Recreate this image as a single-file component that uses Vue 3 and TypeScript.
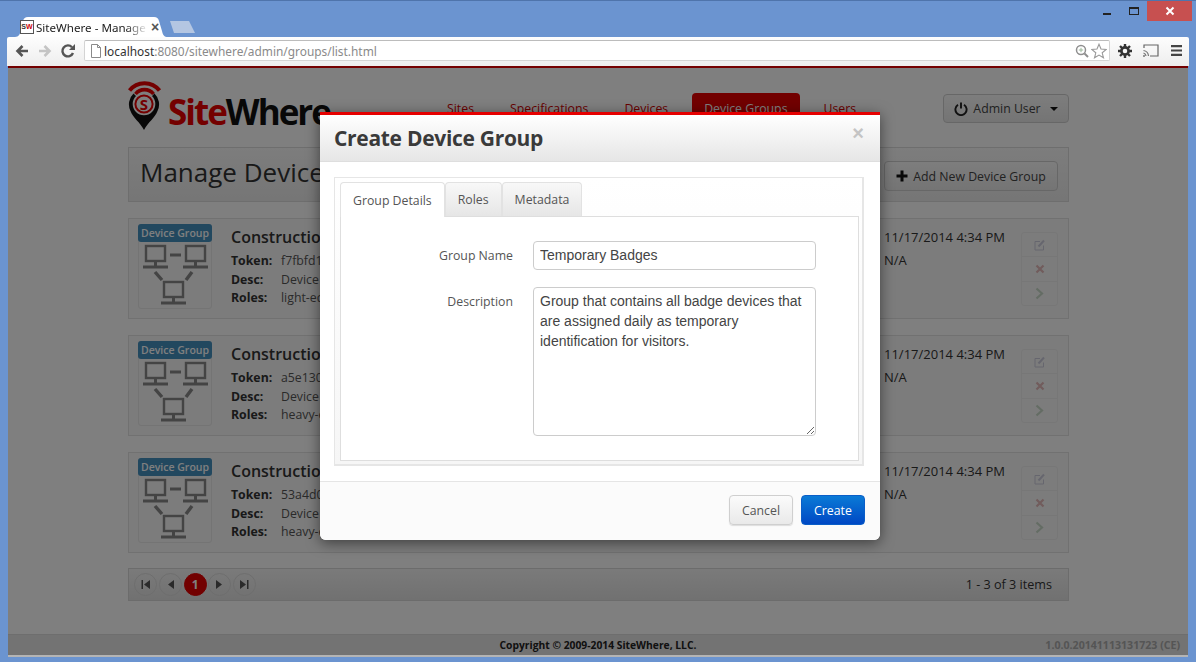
<template>
  <div class="window">
    <div class="tabstrip">
      <div class="tab">
        <svg class="tab-shape" width="153" height="20" viewBox="0 0 153 20"><path d="M0 20 C4 20 5 17 6 13 L8 4 C9 1 10 0 13 0 H139 C142 0 143 1 144 4 L147 14 C148 18 149 20 153 20 Z" fill="#fff" /></svg>
        <span class="favicon"><b>S</b><i>W</i></span>
        <span class="tab-title">SiteWhere - Manage</span>
        <span class="tab-close">×</span>
      </div>
      <svg class="newtab" width="25" height="12" viewBox="0 0 25 12"><path d="M0 0 H19 L25 12 H4 Z" fill="#b4c6e2" /></svg>
      <div class="win-controls">
        <span class="win-min"></span>
        <span class="win-max"></span>
        <span class="win-close">
          <svg width="10" height="10" viewBox="0 0 10 10"><path d="M1.5 1.5 L8.5 8.5 M8.5 1.5 L1.5 8.5" stroke="#fff" stroke-width="2" /></svg>
        </span>
      </div>
    </div>

    <div class="toolbar">
      <svg class="nav-icon" width="16" height="16" viewBox="0 0 16 16"><path d="M14 8 H4 M8.5 3 L3.5 8 L8.5 13" fill="none" stroke="#555" stroke-width="2.6" /></svg>
      <svg class="nav-icon" width="16" height="16" viewBox="0 0 16 16"><path d="M2 8 H12 M7.5 3 L12.5 8 L7.5 13" fill="none" stroke="#c4c4c4" stroke-width="2.6" /></svg>
      <svg class="nav-icon" width="16" height="16" viewBox="0 0 16 16"><path d="M13 10 A5.5 5.5 0 1 1 12 4.2" fill="none" stroke="#555" stroke-width="2.4" /><path d="M9 7 H15 V1 Z" fill="#555" /></svg>
      <div class="omnibox">
        <svg width="12" height="14" viewBox="0 0 12 14"><path d="M1.5 .5 H7.5 L10.5 3.5 V13.5 H1.5 Z M7.5 .5 V3.5 H10.5" fill="#fff" stroke="#8a8a8a" /></svg>
        <span class="url"><em>localhost</em>:8080/sitewhere/admin/groups/list.html</span>
        <svg class="omni-zoom" width="14" height="14" viewBox="0 0 14 14"><circle cx="6" cy="6" r="4.5" fill="none" stroke="#8f8f8f" stroke-width="1.5" /><path d="M9.5 9.5 L13 13" stroke="#8f8f8f" stroke-width="2" /><path d="M3.8 6 H8.2 M6 3.8 V8.2" stroke="#9cb89c" /></svg>
        <svg width="16" height="16" viewBox="0 0 16 16"><path d="M8 1.2 L10 6 L15.2 6.4 L11.2 9.8 L12.5 14.8 L8 12.1 L3.5 14.8 L4.8 9.8 L.8 6.4 L6 6 Z" fill="#fff" stroke="#999" stroke-width="1.1" /></svg>
      </div>
      <svg class="tool-icon" width="14" height="14" viewBox="0 0 14 14"><circle cx="7" cy="7" r="3.6" fill="none" stroke="#333" stroke-width="2.6" /><path d="M7 0 V3 M7 11 V14 M0 7 H3 M11 7 H14 M2 2 L4 4 M10 10 L12 12 M12 2 L10 4 M4 10 L2 12" stroke="#333" stroke-width="2.4" /></svg>
      <svg class="tool-icon cast" width="16" height="13" viewBox="0 0 16 13"><path d="M1 4 V1 H15 V12 H7" fill="none" stroke="#666" stroke-width="1.2" /><path d="M.5 6.5 A6 6 0 0 1 5.5 12 M.5 9 A3.5 3.5 0 0 1 3 12" fill="none" stroke="#777" stroke-width="1.2" /><circle cx="1" cy="12" r="1" fill="#777" /></svg>
      <svg class="tool-icon menu" width="11" height="11" viewBox="0 0 11 11"><path d="M0 1.2 H11 M0 5.5 H11 M0 9.8 H11" stroke="#444" stroke-width="2.2" /></svg>
    </div>

    <div class="page">
      <div class="container">
        <header class="site-head">
          <div class="logo">
            <svg width="36" height="51" viewBox="0 0 36 51">
              <path d="M1.5 10.5 A19 19 0 0 1 31.5 10.5" fill="none" stroke="#e80000" stroke-width="4" />
              <path d="M7.5 14 A11.5 11.5 0 0 1 25.5 14" fill="none" stroke="#e80000" stroke-width="3.6" />
              <path d="M5.5 13.5 A15 15 0 0 0 2.5 31 C5 38 12 42 16 50 C20 42 27 38 29.5 31 A15 15 0 0 0 26.5 13.5 L24 16 A11.3 11.3 0 1 1 8 16 Z" fill="#111" />
              <circle cx="16" cy="24" r="8.6" fill="none" stroke="#e80000" stroke-width="2" />
              <text x="16" y="29.5" text-anchor="middle" class="logo-s">S</text>
            </svg>
            <span class="logo-text"><span>Site</span>Where</span>
          </div>
          <nav class="main-nav">
            <a v-for="item in navItems" :key="item" :class="{ active: item === 'Device Groups' }">{{ item }}</a>
          </nav>
          <button class="btn user-btn">
            <svg width="14" height="14" viewBox="0 0 14 14"><path d="M4 2.8 A5.6 5.6 0 1 0 10 2.8 M7 .5 V6.5" fill="none" stroke="#222" stroke-width="1.9" /></svg>
            Admin User
            <span class="caret"></span>
          </button>
        </header>

        <div class="title-bar">
          <h1>Manage Device Groups</h1>
          <button class="btn add-btn">
            <svg width="12" height="12" viewBox="0 0 12 12"><path d="M6 .5 V11.5 M.5 6 H11.5" stroke="#111" stroke-width="3" /></svg>
            Add New Device Group
          </button>
        </div>

        <article v-for="group in groups" :key="group.token" class="group-card">
          <div class="thumb">
            <span class="thumb-badge">Device Group</span>
            <svg width="74" height="66" viewBox="0 0 74 66" fill="none" stroke="#888">
              <g v-for="pos in monitors" :key="pos[0]" :transform="`translate(${pos[0]} ${pos[1]})`">
                <rect x="3" y="1" width="19" height="15" stroke-width="2.4" />
                <path d="M12.5 17 V21" stroke-width="3" />
                <path d="M0 22 H25" stroke-width="3" />
              </g>
              <path d="M32 13 H43" stroke-width="3" />
              <path d="M17 30 L24 38 M54 30 L48 38" stroke-width="3.4" />
            </svg>
          </div>
          <div class="group-info">
            <h2>{{ group.name }}</h2>
            <dl>
              <dt>Token:</dt><dd>{{ group.token }}</dd>
              <dt>Desc:</dt><dd>{{ group.desc }}</dd>
              <dt>Roles:</dt><dd>{{ group.roles }}</dd>
            </dl>
          </div>
          <div class="group-dates">
            <span>11/17/2014 4:34 PM</span>
            <span>N/A</span>
          </div>
          <div class="group-actions">
            <span>
              <svg width="12" height="12" viewBox="0 0 12 12" fill="none" stroke="#8d8db5"><path d="M9.5 6.5 V11 H1 V2.5 H6" /><path d="M4.5 7.5 L10 1.5" stroke-width="2" /></svg>
            </span>
            <span>
              <svg width="10" height="10" viewBox="0 0 10 10"><path d="M1.5 1.5 L8.5 8.5 M8.5 1.5 L1.5 8.5" stroke="#c25a5a" stroke-width="2.2" /></svg>
            </span>
            <span>
              <svg width="9" height="13" viewBox="0 0 9 13"><path d="M1.5 1.5 L7 6.5 L1.5 11.5" fill="none" stroke="#82ad82" stroke-width="2.2" /></svg>
            </span>
          </div>
        </article>

        <div class="pager">
          <span class="pg">
            <svg width="9" height="9" viewBox="0 0 9 9"><path d="M.5 0 H2 V9 H.5 Z M9 0 V9 L3 4.5 Z" /></svg>
          </span>
          <span class="pg">
            <svg width="7" height="9" viewBox="0 0 7 9"><path d="M7 0 V9 L1 4.5 Z" /></svg>
          </span>
          <span class="pg current">1</span>
          <span class="pg">
            <svg width="7" height="9" viewBox="0 0 7 9"><path d="M0 0 V9 L6 4.5 Z" /></svg>
          </span>
          <span class="pg">
            <svg width="9" height="9" viewBox="0 0 9 9"><path d="M0 0 V9 L6 4.5 Z M7 0 H8.5 V9 H7 Z" /></svg>
          </span>
          <span class="pager-info">1 - 3 of 3 items</span>
        </div>
      </div>

      <footer class="site-foot">
        <span>Copyright © 2009-2014 SiteWhere, LLC.</span>
        <span class="version">1.0.0.20141113131723 (CE)</span>
      </footer>

      <div class="backdrop"></div>

      <div class="modal">
        <div class="modal-head">
          <h3>Create Device Group</h3>
          <span class="modal-close">×</span>
        </div>
        <div class="modal-body">
          <div class="tabs">
            <div class="tab-row">
              <a v-for="t in dialogTabs" :key="t" :class="{ on: t === 'Group Details' }">{{ t }}</a>
            </div>
            <div class="tab-pane">
              <div class="field">
                <label>Group Name</label>
                <input type="text" :value="groupName" />
              </div>
              <div class="field">
                <label>Description</label>
                <textarea :value="description"></textarea>
              </div>
            </div>
          </div>
        </div>
        <div class="modal-foot">
          <button class="btn cancel">Cancel</button>
          <button class="btn create">Create</button>
        </div>
      </div>
    </div>
  </div>
</template>

<script setup lang="ts">
const navItems = ['Sites', 'Specifications', 'Devices', 'Device Groups', 'Users']
const dialogTabs = ['Group Details', 'Roles', 'Metadata']
const monitors = [[5, 3], [45, 3], [23, 39]]

const groups = [
  { name: 'Construction Devices', token: 'f7fbfd12', desc: 'Device group', roles: 'light-equipment' },
  { name: 'Construction Devices', token: 'a5e13012', desc: 'Device group', roles: 'heavy-equipment' },
  { name: 'Construction Devices', token: '53a4d012', desc: 'Device group', roles: 'heavy-equipment' },
]

const groupName = 'Temporary Badges'
const description = 'Group that contains all badge devices that are assigned daily as temporary identification for visitors.'
</script>

<style>
html, body { margin: 0; overflow: hidden; }
</style>

<style scoped>
.window {
  width: 1196px;
  height: 662px;
  box-sizing: border-box;
  padding: 0 7px 5px;
  background: #6b94d0;
  border-top: 1px solid #4f74ab;
  display: flex;
  flex-direction: column;
  font-family: "Open Sans", "Liberation Sans", sans-serif;
  color: #333;
  overflow: hidden;
}
.tabstrip { height: 36px; display: flex; align-items: flex-end; padding-left: 8px; flex-shrink: 0; }
.tab { position: relative; width: 153px; height: 20px; display: flex; align-items: center; padding-left: 5px; box-sizing: border-box; font-family: "Noto Sans", sans-serif; font-size: 11.6px; color: #222; }
.tab-shape { position: absolute; left: 0; top: 0; }
.favicon { position: relative; width: 12px; height: 12px; border: 1px solid #555; background: #fff; font-size: 7px; line-height: 12px; text-align: center; font-family: "Liberation Sans", sans-serif; }
.favicon b { color: #333; }
.favicon i { color: #c00; font-style: normal; font-weight: 700; }
.tab-title { position: relative; margin-left: 2px; width: 112px; white-space: nowrap; -webkit-mask-image: linear-gradient(to right, #000 80%, transparent); mask-image: linear-gradient(to right, #000 80%, transparent); }
.tab-close { position: relative; margin-left: 3px; font: 700 14px "Liberation Sans", sans-serif; color: #555; }
.newtab { margin: 0 0 4px 2px; }
.win-controls { margin-left: auto; margin-right: -3px; align-self: flex-start; display: flex; align-items: flex-start; }
.win-min { width: 8px; height: 2px; margin-top: 12px; background: #222; }
.win-max { width: 8px; height: 5px; margin: 6px 8px 0 18px; border: 1px solid #222; border-top-width: 2px; }
.win-close { width: 45px; height: 20px; background: #c75050; display: flex; align-items: center; justify-content: center; }

.toolbar { height: 29px; flex-shrink: 0; box-sizing: border-box; display: flex; align-items: center; padding: 0 7px 2px 7px; background: linear-gradient(#fdfdfd, #eeeeee); border-radius: 2px 2px 0 0; }
.nav-icon { margin-right: 7px; flex-shrink: 0; }
.omnibox { flex: 1; height: 21px; margin: 0 8px 0 1px; padding: 0 2px 0 5px; box-sizing: border-box; display: flex; align-items: center; background: #fff; border: 1px solid #d4d4d4; border-top-color: #bcbcbc; border-radius: 2px; font-family: "Noto Sans", sans-serif; font-size: 11.9px; color: #8a8a8a; }
.url { flex: 1; margin-left: 2px; white-space: nowrap; }
.url em { font-style: normal; color: #333; }
.omni-zoom { margin-right: 2px; }
.tool-icon { flex-shrink: 0; }
.cast { margin-left: 11px; }
.menu { margin-left: 12px; }

.page { position: relative; flex: 1; min-height: 0; margin: 0 1px; display: flex; flex-direction: column; background: #fff; border-top: 2px solid #e80000; border-bottom: 2px solid #b4b4b4; box-sizing: border-box; }
.container { width: 941px; margin-left: 120px; flex: 1; min-height: 0; font-size: 12.3px; }
.site-head { height: 79px; display: flex; align-items: flex-start; }
.logo { display: flex; align-items: flex-start; margin-top: 12px; width: 319px; flex-shrink: 0; }
.logo-text { margin: 10px 0 0 4px; font: 700 35px/44px "Open Sans", sans-serif; letter-spacing: -2px; color: #111; }
.logo-text span { color: #e80000; }
.logo-s { font: 700 15px "Open Sans", sans-serif; fill: #e80000; }
.main-nav { display: flex; align-items: center; height: 30px; margin-top: 25px; font-size: 12.3px; color: #d00000; }
.main-nav a { padding: 0 36px 0 0; white-space: nowrap; }
.main-nav a.active { margin: 0 24px 0 -12px; padding: 7px 12px; border-radius: 4px 4px 0 0; background: #e40000; color: #fff; }
.btn { box-sizing: border-box; font-family: "Open Sans", sans-serif; font-size: 12.3px; color: #444; border: 1px solid #cfcfcf; border-radius: 4px; background: linear-gradient(#fbfbfb, #e9e9e9); display: inline-flex; align-items: center; justify-content: center; padding: 0; }
.user-btn { margin: 26px 0 0 auto; width: 126px; height: 29px; gap: 5px; }
.caret { margin-left: 4px; border: 4px solid transparent; border-top-color: #111; border-bottom-width: 0; }
.title-bar { height: 55px; display: flex; align-items: center; justify-content: space-between; padding: 0 10px 0 11px; box-sizing: border-box; background: linear-gradient(#fafafa, #ececec); border: 1px solid #dcdcdc; margin-bottom: 16px; }
h1 { margin: 0 0 6px; font-size: 26px; font-weight: 400; color: #333; white-space: nowrap; }
.add-btn { width: 174px; height: 30px; gap: 5px; margin-top: 3px; }

.group-card { height: 101px; margin-bottom: 16px; padding: 5px 10px 5px 9px; box-sizing: border-box; display: flex; background: #f8f8f8; border: 1px solid #e2e2e2; }
.thumb { width: 74px; height: 85px; flex-shrink: 0; box-sizing: border-box; background: #f8f8f8; border: 1px solid #e8e8e8; border-radius: 3px; display: flex; flex-direction: column; align-items: center; }
.thumb-badge { width: 74px; height: 18px; margin: -1px 0 0; border-radius: 3px; background: #4590bf; color: #fff; font-size: 10.5px; font-weight: 600; line-height: 18px; text-align: center; white-space: nowrap; }
.group-info { flex: 1; margin-left: 19px; min-width: 0; }
.group-info h2 { margin: 2px 0 4px; font-size: 16px; line-height: 22px; font-weight: 600; color: #333; }
dl { margin: 0; display: grid; grid-template-columns: 50px 1fr; font-size: 12.3px; line-height: 18.5px; color: #555; }
dt { font-weight: 700; color: #333; }
dd { margin: 0; }
.group-dates { width: 137px; flex-shrink: 0; display: flex; flex-direction: column; gap: 5px; padding-top: 4px; font-size: 13px; line-height: 18px; color: #333; }
.group-actions { width: 37px; margin: 8px 0 0 0; height: 74px; flex-shrink: 0; display: flex; flex-direction: column; border: 1px solid #efefef; border-radius: 3px; box-sizing: border-box; }
.group-actions span { flex: 1; display: flex; align-items: center; justify-content: center; border-bottom: 1px solid #efefef; }
.group-actions span:last-child { border-bottom: none; }
.group-actions svg { opacity: .4; }

.pager { height: 33px; margin-top: -1px; display: flex; align-items: center; padding: 0 5px; box-sizing: border-box; background: linear-gradient(#f5f5f5, #e2e2e2); border: 1px solid #d8d8d8; font-size: 12.6px; gap: 1.8px; }
.pg { width: 23px; height: 23px; box-sizing: border-box; border: 1px solid #dcdcdc; border-radius: 50%; display: flex; align-items: center; justify-content: center; }
.pg svg { fill: #555; }
.pg.current { background: #e40000; border-color: #e40000; color: #fff; font-weight: 700; font-size: 12px; }
.pager-info { margin-left: auto; margin-right: 11px; color: #333; }

.site-foot { height: 21px; flex-shrink: 0; position: relative; display: flex; align-items: center; justify-content: center; background: #e6e6e6; border-top: 1px solid #dcdcdc; box-sizing: border-box; font-size: 10.3px; font-weight: 700; color: #222; }
.version { position: absolute; right: 8px; font-size: 10.6px; color: #aaa; }
.backdrop { position: absolute; inset: -2px 0 0; background: rgba(0, 0, 0, .5); }

.modal { position: absolute; left: 312px; top: 44px; width: 560px; height: 428px; box-sizing: border-box; display: flex; flex-direction: column; background: #fff; border-top: 3px solid #e50000; border-radius: 0 0 6px 6px; box-shadow: 0 3px 14px rgba(0, 0, 0, .5); font-size: 12.3px; }
.modal-head { height: 47px; flex-shrink: 0; box-sizing: border-box; display: flex; align-items: center; justify-content: space-between; padding: 0 16px 0 14px; background: linear-gradient(#fff, #e6e6e6); border-bottom: 1px solid #dedede; }
h3 { margin: 0 0 1px; font-size: 21px; font-weight: 700; color: #3a3a3a; letter-spacing: -.3px; }
.modal-close { margin-top: -10px; font: 700 20px "Liberation Sans", sans-serif; color: #c4c4c4; }
.modal-body { flex: 1; padding: 15px 16px 15px 14px; min-height: 0; display: flex; }
.tabs { flex: 1; box-sizing: border-box; padding: 4px 3px 3px 5px; background: linear-gradient(#fff, #f6f6f6); border: 1px solid #e6e6e6; border-width: 1px 2px 2px 1px; display: flex; flex-direction: column; }
.tab-row { display: flex; height: 35px; flex-shrink: 0; position: relative; z-index: 1; }
.tab-row a { height: 34px; box-sizing: border-box; padding: 0 12px; display: flex; align-items: center; border: 1px solid #e2e2e2; border-bottom: none; border-radius: 4px 4px 0 0; background: linear-gradient(#f8f8f8, #e6e6e6); color: #555; }
.tab-row a.on { height: 35px; background: #fff; }
.tab-pane { flex: 1; margin-top: -1px; background: #fff; border: 1px solid #dedede; padding: 24px 42px 0 0; box-sizing: border-box; }
.field { display: flex; margin-bottom: 17px; }
.field label { width: 172px; text-align: right; color: #555; padding-top: 6px; flex-shrink: 0; line-height: 18px; }
.field input, .field textarea { display: block; margin-left: 20px; flex: 1; box-sizing: border-box; border: 1px solid #ccc; border-radius: 4px; padding: 3px 6px 5px; font: 14px/20px "Liberation Sans", Arial, sans-serif; color: #444; outline: none; }
.field input { height: 29px; }
.field textarea { height: 149px; padding-top: 3px; }
.modal-foot { height: 59px; flex-shrink: 0; box-sizing: border-box; display: flex; justify-content: flex-end; align-items: center; gap: 8px; padding: 0 15px 2px 0; background: #fbfbfb; border-top: 1px solid #e5e5e5; border-radius: 0 0 6px 6px; }
.cancel { width: 64px; height: 30px; color: #555; box-shadow: 0 1px 1px rgba(0, 0, 0, .12); }
.create { width: 64px; height: 30px; border-color: #0a5ec8; background: linear-gradient(#0a7ad6, #0048c4); color: #fff; }
</style>
